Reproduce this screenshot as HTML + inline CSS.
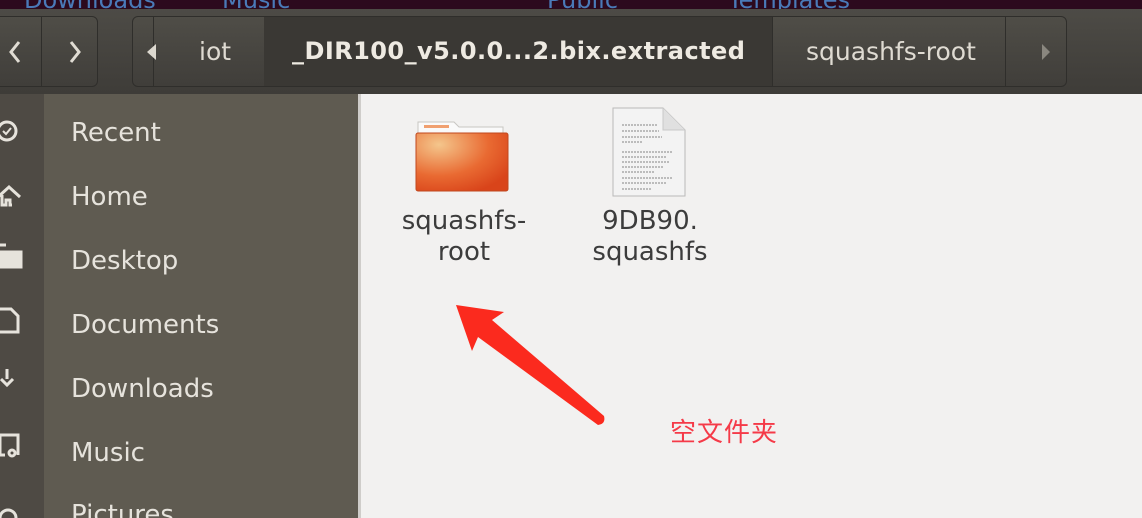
<!DOCTYPE html>
<html><head><meta charset="utf-8"><style>
*{margin:0;padding:0;box-sizing:border-box}
html,body{width:1142px;height:518px;overflow:hidden}
body{position:relative;background:#f2f1f0;font-family:"Liberation Sans","DejaVu Sans",sans-serif}
.top{position:absolute;left:0;top:0;width:1142px;height:9px;background:#2c0a1e;overflow:hidden}
.top span{position:absolute;top:-14px;color:#4a7ab8;font-size:24px;font-family:"DejaVu Sans",sans-serif}
.tb{position:absolute;left:0;top:9px;width:1142px;height:85px;background:linear-gradient(#4d4b46,#3e3c38)}
.btn{position:absolute;top:7px;height:71px;border:1px solid #2f2e2b;border-radius:6px;background:linear-gradient(#4f4d47,#403e3a)}
.t{position:absolute;color:#dfdbd2;font-size:25px;font-family:"DejaVu Sans",sans-serif;top:28px}
.side{position:absolute;left:0;top:94px;width:358px;height:424px;background:#5f5b51}
.icol{position:absolute;left:0;top:94px;width:44px;height:424px;background:#4e4a44}
.sb{position:absolute;left:358px;top:94px;width:3px;height:424px;background:#cfcdca}
.it{position:absolute;left:71px;color:#e6e3dc;font-size:26px;font-family:"DejaVu Sans",sans-serif}
.lbl{position:absolute;color:#3c3c3c;font-size:26px;font-family:"DejaVu Sans",sans-serif;text-align:center;line-height:31px}
</style></head><body>
<div class="top"><span style="left:24px">Downloads</span><span style="left:222px">Music</span><span style="left:547px">Public</span><span style="left:728px">Templates</span></div>
<div class="tb">
 <div class="btn" style="left:-6px;width:104px"></div>
 <div style="position:absolute;left:41px;top:7px;width:1px;height:71px;background:#2f2e2b"></div>
 <svg style="position:absolute;left:0;top:28px" width="100" height="30" fill="none" stroke="#e0dcd3" stroke-width="3"><path d="M19 5l-8 10 8 10M71 5l8 10-8 10"/></svg>
 <div class="btn" style="left:132px;width:935px"></div>
 <div style="position:absolute;left:153px;top:7px;width:1px;height:71px;background:#2f2e2b"></div>
 <div style="position:absolute;left:147px;top:35px;border-right:9px solid #dcd8cf;border-top:8px solid transparent;border-bottom:8px solid transparent"></div>
 <div class="t" style="left:199px">iot</div>
 <div style="position:absolute;left:264px;top:8px;width:508px;height:69px;background:#3a3834"></div>
 <div class="t" style="left:292px;font-weight:bold;color:#eeeae2;font-size:24px;letter-spacing:0.45px">_DIR100_v5.0.0...2.bix.extracted</div>
 <div style="position:absolute;left:772px;top:7px;width:1px;height:71px;background:#2f2e2b"></div>
 <div class="t" style="left:806px">squashfs-root</div>
 <div style="position:absolute;left:1005px;top:7px;width:1px;height:71px;background:#2f2e2b"></div>
 <div style="position:absolute;left:1042px;top:35px;border-left:8px solid #8a877f;border-top:8px solid transparent;border-bottom:8px solid transparent"></div>
</div>
<div class="side"></div><div class="icol"></div><div class="sb"></div>
<div class="it" style="top:118px">Recent</div>
<div class="it" style="top:182px">Home</div>
<div class="it" style="top:246px">Desktop</div>
<div class="it" style="top:310px">Documents</div>
<div class="it" style="top:374px">Downloads</div>
<div class="it" style="top:438px">Music</div>
<div class="it" style="top:500px">Pictures</div>
<svg style="position:absolute;left:0;top:94px" width="44" height="424" fill="none" stroke="#e6e3dc" stroke-width="3">
<circle cx="7" cy="37" r="9"/><path d="M3 37l3 3 5-6" stroke-width="2"/>
<path d="M-2 103l11-10 11 10M2 101v10h4v-5h4v5h2"/>
<path d="M0 151h6M0 158h21v15H0z" fill="#e6e3dc"/>
<path d="M0 215h11l7 7v16H0"/>
<path d="M7 275v10M1 285l6 6 6-6"/>
<path d="M0 341h18v20M0 341v20h5" /><circle cx="12" cy="359" r="3"/>
<circle cx="8" cy="424" r="8"/>
</svg>
<svg style="position:absolute;left:410px;top:118px" width="105" height="85">
<defs><radialGradient id="g" cx="0.25" cy="0.2" r="0.9"><stop offset="0" stop-color="#f4c68c"/><stop offset="0.6" stop-color="#e96a32"/><stop offset="1" stop-color="#d9441a"/></radialGradient></defs>
<path d="M8 4h36l5 5h44v12H8z" fill="#fafafa" stroke="#c8c6c2"/>
<rect x="14" y="7" width="25" height="3" fill="#f0a070"/>
<rect x="6" y="15" width="92" height="58" rx="2" fill="url(#g)" stroke="#c0481e"/>
</svg>
<svg style="position:absolute;left:610px;top:105px" width="80" height="95">
<path d="M3 3h50l22 22v66H3z" fill="#f3f3f3" stroke="#b9b9b9"/>
<path d="M53 3v22h22" fill="#e0e0e0" stroke="#c9c9c9"/>
<g stroke="#9a9a9a" stroke-width="1.3" stroke-dasharray="2 1">
<path d="M12 20h35M12 26h37M12 32h40M12 37h20M12 47h50M12 52h45M12 57h48M12 62h42M12 67h32M12 73h50M12 78h45M12 84h30"/></g>
</svg>
<div class="lbl" style="left:384px;top:206px;width:160px">squashfs-<br>root</div>
<div class="lbl" style="left:570px;top:206px;width:160px">9DB90.<br>squashfs</div>
<svg style="position:absolute;left:0;top:0" width="1142" height="518">
<path d="M456 305L504 312L492 320L604 416Q606 424 598 425L478 337L472 351Z" fill="#fb2a1e"/>
</svg>
<div style="position:absolute;left:670px;top:415px;color:#f53a48;font-size:26px;font-family:'Noto Sans CJK SC',sans-serif;line-height:32px;letter-spacing:1px">空文件夹</div>
</body></html>
